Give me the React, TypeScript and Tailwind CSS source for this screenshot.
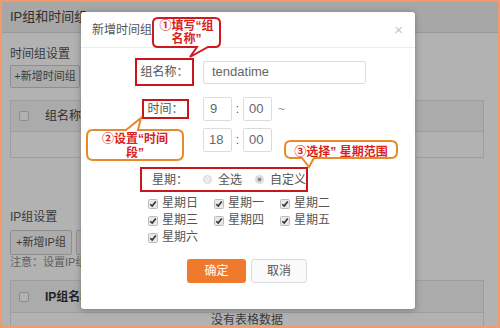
import React from "react";

const font = { fontFamily: '"Liberation Sans", "Noto Sans CJK SC", sans-serif' };

function Check() {
  return (
    <svg width="10" height="10" viewBox="0 0 10 10" className="shrink-0">
      <rect x="0.5" y="0.5" width="9" height="9" rx="1" fill="#e9e9e9" stroke="#bdbdbd" />
      <path d="M2.3 5.2 L4.2 7.1 L7.8 2.6" fill="none" stroke="#333" strokeWidth="1.6" />
    </svg>
  );
}

function Radio({ on }: { on?: boolean }) {
  return (
    <svg width="9" height="9" viewBox="0 0 9 9" className="shrink-0">
      <circle cx="4.5" cy="4.5" r="4" fill={on ? "#e2e2e2" : "#ececec"} stroke="#d6d6d6" />
      {on && <circle cx="4.5" cy="4.5" r="2" fill="#8a8a8a" />}
    </svg>
  );
}

function PageCheck() {
  return <span className="inline-block size-[10px] rounded-[2px] border border-[#ccc] bg-white" />;
}

const days = ["星期日", "星期一", "星期二", "星期三", "星期四", "星期五", "星期六"];

export default function App() {
  return (
    <div
      className="relative h-[328px] w-[500px] overflow-hidden border-2 border-[#f29a6a] bg-white text-[#333]"
      style={font}
    >
      {/* page behind the dialog */}
      <div className="flex h-[31px] items-center border-b border-[#dcdcdc] bg-[#f0f0f0] px-[8px] text-[13px] text-[#444]">
        IP组和时间组
      </div>
      <div className="px-[8px]">
        <div className="pt-[13px] text-[12px] leading-[16px] text-[#555]">时间组设置</div>
        <div className="mt-[3px] flex">
          <div className="flex h-[23px] w-[70px] items-center justify-center rounded-[2px] border border-[#ccc] bg-[#f7f7f7] text-[11px] text-[#555]">
            +新增时间组
          </div>
        </div>
        <div className="mt-[12px] w-[474px] border border-[#e3e3e3]">
          <div className="flex h-[30px] items-center gap-[16px] bg-[#f5f5f5] pl-[8px] text-[12px] text-[#444]">
            <PageCheck />
            <span>组名称</span>
          </div>
          <div className="h-[26px] border-t border-[#e3e3e3]" />
        </div>
        <div className="mt-[51px] text-[12px] leading-[16px] text-[#555]">IP组设置</div>
        <div className="mt-[5px] flex gap-[4px]">
          <div className="flex h-[25px] w-[62px] items-center justify-center rounded-[2px] border border-[#ccc] bg-[#f7f7f7] text-[11px] text-[#555]">
            +新增IP组
          </div>
          <div className="h-[25px] w-[60px] rounded-[2px] border border-[#ccc] bg-[#f7f7f7]" />
        </div>
        <div className="text-[11px] leading-[14px] text-[#8a8a8a]">注意：设置IP组后，请到对应功能中引用</div>
        <div className="mt-[11px] w-[474px] border border-[#e3e3e3]">
          <div className="flex h-[31px] items-center gap-[16px] bg-[#f5f5f5] pl-[8px] text-[12px] font-bold text-[#333]">
            <PageCheck />
            <span>IP组名称</span>
          </div>
          <div className="flex h-[22px] justify-center border-t border-[#e3e3e3] pt-[1px] text-[12px] leading-[13px] text-[#555]">
            没有表格数据
          </div>
        </div>
      </div>

      {/* overlay */}
      <div className="absolute inset-0 bg-black/30" />

      {/* dialog */}
      <div className="absolute left-[79px] top-[10px] h-[297px] w-[334px] rounded-[3px] bg-white text-[12px] text-[#555] shadow-[0_1px_6px_rgba(0,0,0,0.3)]">
        <div className="flex h-[36px] items-center justify-between border-b border-[#ececec] pl-[11px] pr-[12px]">
          <span>新增时间组</span>
          <span className="text-[15px] leading-none text-[#c4c4c4]">×</span>
        </div>

        <div className="mt-[10px] flex items-center">
          <div className="w-[122px]">
            <div className="ml-[54px] flex h-[28px] w-[59px] items-center justify-center border-2 border-[#c8161d]">
              组名称：
            </div>
          </div>
          <div className="flex h-[23px] w-[163px] items-center rounded-[2px] border border-[#dcdcdc] px-[8px] text-[13px] text-[#666]">
            tendatime
          </div>
        </div>

        <div className="mt-[11px] flex items-center">
          <div className="w-[122px]">
            <div className="ml-[61px] flex h-[20px] w-[47px] items-center justify-center border-2 border-[#c8161d]">
              时间：
            </div>
          </div>
          <div className="flex h-[24px] w-[29px] items-center rounded-[2px] border border-[#dcdcdc] pl-[6px] text-[13px] text-[#666]">
            9
          </div>
          <span className="w-[11px] text-center">:</span>
          <div className="flex h-[24px] w-[29px] items-center rounded-[2px] border border-[#dcdcdc] pl-[5px] text-[13px] text-[#666]">
            00
          </div>
          <span className="ml-[6px] text-[#999]">~</span>
        </div>

        <div className="mt-[7px] flex items-center">
          <div className="w-[122px]" />
          <div className="flex h-[24px] w-[29px] items-center rounded-[2px] border border-[#dcdcdc] pl-[5px] text-[13px] text-[#666]">
            18
          </div>
          <span className="w-[11px] text-center">:</span>
          <div className="flex h-[24px] w-[29px] items-center rounded-[2px] border border-[#dcdcdc] pl-[5px] text-[13px] text-[#666]">
            00
          </div>
        </div>

        <div className="ml-[59px] mt-[15px] flex h-[25px] w-[168px] items-center border-2 border-[#c8161d] pl-[10px]">
          <span className="w-[51px]">星期：</span>
          <Radio />
          <span className="ml-[6px] w-[37px]">全选</span>
          <Radio on />
          <span className="ml-[6px]">自定义</span>
        </div>

        <div className="ml-[67px] mt-[3px] grid grid-cols-[66px_66px_66px] leading-[17px]">
          {days.map((d) => (
            <div key={d} className="flex items-center gap-[4px]">
              <Check />
              <span>{d}</span>
            </div>
          ))}
        </div>

        <div className="ml-[106px] mt-[13px] flex gap-[5px]">
          <div className="flex h-[24px] w-[59px] items-center justify-center rounded-[3px] bg-[#f07a2c] text-white">
            确定
          </div>
          <div className="flex h-[24px] w-[56px] items-center justify-center rounded-[3px] border border-[#dcdcdc] bg-[#fafafa]">
            取消
          </div>
        </div>
      </div>

      {/* callouts */}
      <svg className="absolute left-0 top-0" width="496" height="324" viewBox="2 2 496 324">
        <path
          d="M158 18 H215 Q220 18 220 23 V42 Q220 47 215 47 H208 L190 57 L197 47 H158 Q153 47 153 42 V23 Q153 18 158 18 Z"
          fill="#fff"
          stroke="#d0181f"
          strokeWidth="2"
        />
        <path
          d="M93 130 H126 L141 118 L138 130 H177 Q183 130 183 136 V154 Q183 160 177 160 H93 Q87 160 87 154 V136 Q87 130 93 130 Z"
          fill="#fff"
          stroke="#e8892b"
          strokeWidth="2"
        />
        <path
          d="M291 141 H391 Q397 141 397 147 V152 Q397 158 391 158 H314 L309 167 L302 158 H291 Q285 158 285 152 V147 Q285 141 291 141 Z"
          fill="#fff"
          stroke="#e8892b"
          strokeWidth="2"
        />
      </svg>
      <div className="absolute left-[151px] top-[18px] flex w-[67px] flex-col items-center text-[12px] font-bold leading-[13px] text-[#d9221c]">
        <span>①填写“组</span>
        <span>名称”</span>
      </div>
      <div className="absolute left-[85px] top-[130px] flex w-[96px] flex-col items-center text-[12px] font-bold leading-[14px] text-[#d9221c]">
        <span>②设置“时间</span>
        <span>段”</span>
      </div>
      <div className="absolute left-[283px] top-[141px] flex h-[17px] w-[112px] items-center justify-center text-[12px] font-bold leading-none text-[#d9221c]">
        ③选择” 星期范围
      </div>
    </div>
  );
}
